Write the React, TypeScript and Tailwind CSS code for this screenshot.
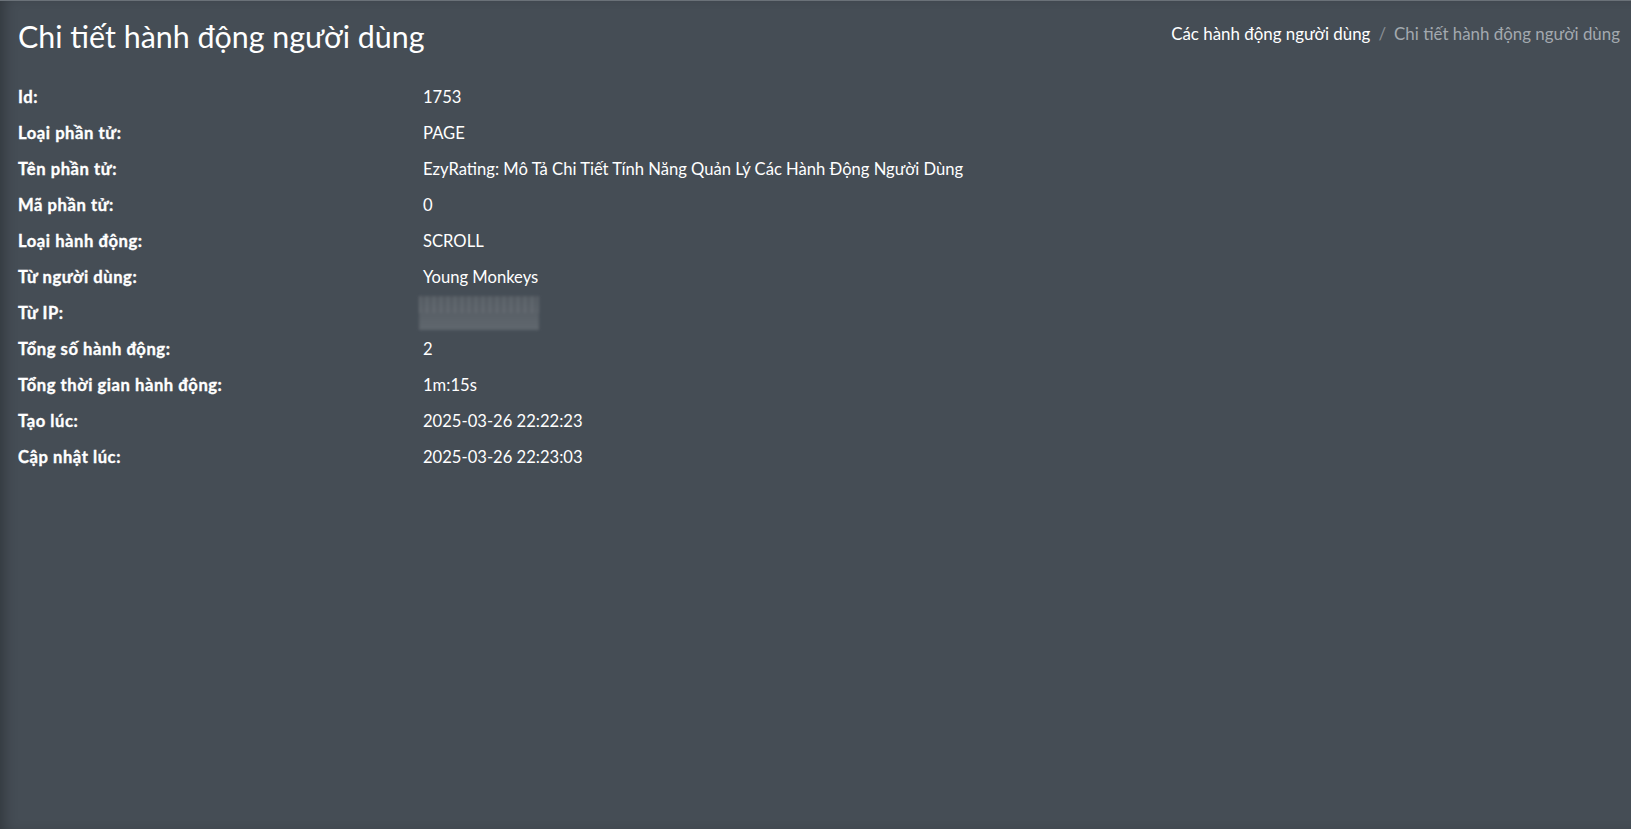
import React from "react";

interface DetailRow {
  label: string;
  value: string;
  hidden?: boolean;
}

const rows: DetailRow[] = [
  { label: "Id:", value: "1753" },
  { label: "Loại phần tử:", value: "PAGE" },
  {
    label: "Tên phần tử:",
    value: "EzyRating: Mô Tả Chi Tiết Tính Năng Quản Lý Các Hành Động Người Dùng",
  },
  { label: "Mã phần tử:", value: "0" },
  { label: "Loại hành động:", value: "SCROLL" },
  { label: "Từ người dùng:", value: "Young Monkeys" },
  { label: "Từ IP:", value: "", hidden: true },
  { label: "Tổng số hành động:", value: "2" },
  { label: "Tổng thời gian hành động:", value: "1m:15s" },
  { label: "Tạo lúc:", value: "2025-03-26 22:22:23" },
  { label: "Cập nhật lúc:", value: "2025-03-26 22:23:03" },
];

// blurred box standing in for the masked IP address
const BlurredValue: React.FC = () => (
  <div className="w-[120px] h-[34px] -ml-[4px] bg-gradient-to-b from-[#51585f] to-[#60676e] blur-[1.6px]">
    <div className="h-[17px] w-full bg-[repeating-linear-gradient(90deg,rgba(255,255,255,0.10)_0px,rgba(255,255,255,0.10)_2px,transparent_2px,transparent_4px,rgba(255,255,255,0.05)_4px,rgba(255,255,255,0.05)_5px,transparent_5px,transparent_7px)]" />
  </div>
);

const App: React.FC = () => {
  return (
    <div
      className="h-[829px] w-full bg-[#454d55] text-white border-t border-[#6a7178] shadow-[inset_10px_0_14px_-6px_rgba(0,0,0,0.28)]"
      style={{ fontFamily: "Lato, 'Noto Sans', sans-serif" }}
    >
      <div className="flex items-start justify-between pl-[18px] pr-[11px] pt-[18px]">
        <h1 className="text-[30.4px] leading-[34px] font-normal">
          Chi tiết hành động người dùng
        </h1>
        <div className="flex items-center text-[16.9px] leading-[24px] mt-[3px]">
          <span className="text-white">Các hành động người dùng</span>
          <span className="px-[8px] text-[#8a9096]">/</span>
          <span className="text-[#a3a9af]">Chi tiết hành động người dùng</span>
        </div>
      </div>

      <div className="mt-[26px] pl-[18px] grid grid-cols-[405px_1fr] text-[16.6px]">
        {rows.map((row) => (
          <React.Fragment key={row.label}>
            <div className="h-[36px] flex items-center font-bold tracking-[0.55px] [-webkit-text-stroke:0.35px_#ffffff]">
              {row.label}
            </div>
            <div className="h-[36px] flex items-center">
              {row.hidden ? <BlurredValue /> : row.value}
            </div>
          </React.Fragment>
        ))}
      </div>
    </div>
  );
};

export default App;
